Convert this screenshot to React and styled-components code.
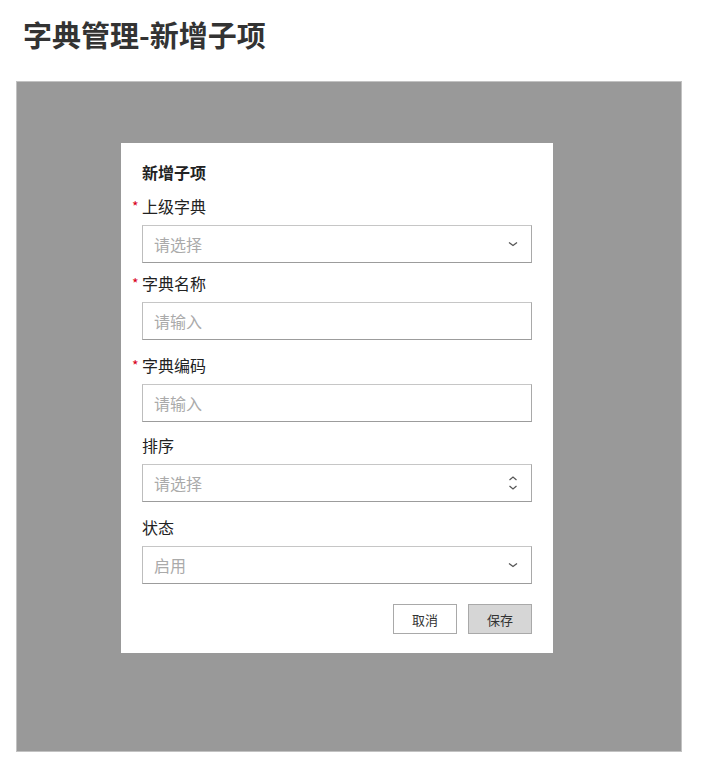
import React from "react";
import styled, { createGlobalStyle } from "styled-components";

const Global = createGlobalStyle`
  html, body { margin: 0; padding: 0; background: #fff; }
  body { font-family: "Noto Sans CJK SC", "Noto Sans", sans-serif; }
  * { box-sizing: border-box; }
`;

const Page = styled.div`
  padding: 14px 22px 16px 16px;
  width: 704px;
`;

const Heading = styled.h1`
  margin: 0 0 27px 7px;
  font-size: 29px;
  line-height: 40px;
  font-weight: 700;
  color: #333;
`;

const Backdrop = styled.div`
  height: 671px;
  background: #999;
  border: 1px solid #c2c2c2;
  padding: 61px 0 0 104px;
`;

const Dialog = styled.div`
  width: 432px;
  background: #fff;
  padding: 19px 21px 19px 21px;
`;

const DialogTitle = styled.div`
  font-size: 16px;
  line-height: 20px;
  font-weight: 700;
  color: #222;
`;

const Field = styled.div`
  margin-top: ${(p) => p.$mt}px;
  display: flex;
  flex-direction: column;
  gap: 10px;
`;

const Label = styled.label`
  position: relative;
  font-size: 16px;
  line-height: 18px;
  color: #222;
  &::before {
    content: ${(p) => (p.$required ? '"*"' : "none")};
    position: absolute;
    left: -10px;
    top: 2px;
    font-size: 14px;
    line-height: 14px;
    color: #d9001b;
  }
`;

const Control = styled.div`
  position: relative;
  height: 38px;
  border: 1px solid;
  border-color: #c6c6c6 #a9a9a9 #9c9c9c #bdbdbd;
  background: #fff;
  display: flex;
  align-items: center;
  padding: 0 13px 1px 11px;
`;

const TextInput = styled.input`
  flex: 1;
  border: none;
  outline: none;
  padding: 0;
  background: transparent;
  font-family: inherit;
  font-size: 16px;
  color: #333;
  &::placeholder { color: #aaa; }
`;

const Value = styled.span`
  flex: 1;
  font-size: 16px;
  color: #aaa;
`;

const Chevron = () => (
  <svg width="10" height="6" viewBox="0 0 10 6">
    <path d="M1 1.5 L5 4.5 L9 1.5" fill="none" stroke="#555" strokeWidth="1.3" />
  </svg>
);

const Spinner = () => (
  <svg width="10" height="16" viewBox="0 0 10 16">
    <path d="M1.5 5 L5 2 L8.5 5" fill="none" stroke="#555" strokeWidth="1.2" />
    <path d="M1.5 11 L5 14 L8.5 11" fill="none" stroke="#555" strokeWidth="1.2" />
  </svg>
);

const Actions = styled.div`
  margin-top: 20px;
  display: flex;
  justify-content: flex-end;
  gap: 11px;
`;

const Button = styled.button`
  width: 64px;
  height: 30px;
  border: 1px solid #a9a9a9;
  background: ${(p) => (p.$primary ? "#d6d6d6" : "#fff")};
  font-family: inherit;
  font-size: 13px;
  color: #333;
  padding: 0;
  cursor: pointer;
`;

export default function App() {
  return (
    <>
      <Global />
      <Page>
        <Heading>字典管理-新增子项</Heading>
        <Backdrop>
          <Dialog>
            <DialogTitle>新增子项</DialogTitle>
            <Field $mt={15}>
              <Label $required>上级字典</Label>
              <Control>
                <Value>请选择</Value>
                <Chevron />
              </Control>
            </Field>
            <Field $mt={11}>
              <Label $required>字典名称</Label>
              <Control>
                <TextInput placeholder="请输入" />
              </Control>
            </Field>
            <Field $mt={16}>
              <Label $required>字典编码</Label>
              <Control>
                <TextInput placeholder="请输入" />
              </Control>
            </Field>
            <Field $mt={14}>
              <Label>排序</Label>
              <Control>
                <TextInput placeholder="请选择" />
                <Spinner />
              </Control>
            </Field>
            <Field $mt={16}>
              <Label>状态</Label>
              <Control>
                <Value>启用</Value>
                <Chevron />
              </Control>
            </Field>
            <Actions>
              <Button>取消</Button>
              <Button $primary>保存</Button>
            </Actions>
          </Dialog>
        </Backdrop>
      </Page>
    </>
  );
}
